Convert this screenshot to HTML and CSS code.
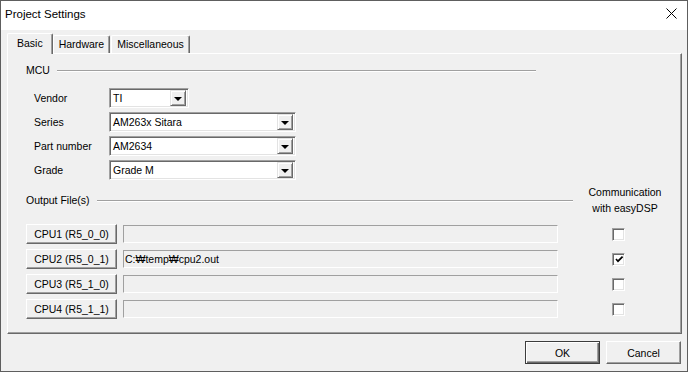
FILE: index.html
```html
<!DOCTYPE html>
<html lang="en">
<head>
    <meta charset="UTF-8">
    <title>Project Settings</title>
    <link rel="stylesheet" href="styles.css">
</head>
<body>
    <div class="window">
        <!-- Title Bar -->
        <div class="titlebar">
            <span class="title">Project Settings</span>
            <svg class="close" width="11" height="11" viewBox="0 0 11 11">
                <path d="M0.5 0.5 L10.5 10.5 M10.5 0.5 L0.5 10.5" stroke="#000" stroke-width="1" fill="none"/>
            </svg>
        </div>

        <div class="client">
            <!-- Tabs -->
            <div class="tabs">
                <div class="tab active">Basic</div>
                <div class="tab">Hardware</div>
                <div class="tab">Miscellaneous</div>
            </div>

            <div class="panel">
                <!-- MCU group -->
                <div class="group-head mcu-head">
                    <span>MCU</span>
                    <div class="rule"></div>
                </div>

                <div class="form">
                    <label>Vendor</label>
                    <div class="combo small"><span>TI</span><div class="drop"><i></i></div></div>
                    <label>Series</label>
                    <div class="combo"><span>AM263x Sitara</span><div class="drop"><i></i></div></div>
                    <label>Part number</label>
                    <div class="combo"><span>AM2634</span><div class="drop"><i></i></div></div>
                    <label>Grade</label>
                    <div class="combo"><span>Grade M</span><div class="drop"><i></i></div></div>
                </div>

                <!-- Output group -->
                <div class="output-head">
                    <div class="group-head out-head">
                        <span>Output File(s)</span>
                        <div class="rule"></div>
                    </div>
                    <div class="comm">Communication<br>with easyDSP</div>
                </div>

                <div class="outputs">
                    <button class="btn cpu">CPU1 (R5_0_0)</button>
                    <div class="field"></div>
                    <div class="check"></div>

                    <button class="btn cpu">CPU2 (R5_0_1)</button>
                    <div class="field">C:₩temp₩cpu2.out</div>
                    <div class="check">
                        <svg width="9" height="9" viewBox="0 0 9 9">
                            <path d="M1 4 L3 6.2 L7.6 1.6" stroke="#000" stroke-width="1.7" fill="none"/>
                        </svg>
                    </div>

                    <button class="btn cpu">CPU3 (R5_1_0)</button>
                    <div class="field"></div>
                    <div class="check"></div>

                    <button class="btn cpu">CPU4 (R5_1_1)</button>
                    <div class="field"></div>
                    <div class="check"></div>
                </div>
            </div>

            <!-- Dialog buttons -->
            <div class="footer">
                <button class="btn dlg default">OK</button>
                <button class="btn dlg">Cancel</button>
            </div>
        </div>
    </div>
</body>
</html>
```

FILE: styles.css
```css
/* General Styles */
body, html {
    margin: 0;
    padding: 0;
    font-family: "Liberation Sans", Arial, sans-serif;
    font-size: 10.5px;
    color: #000;
    background: #fff;
}

.window {
    width: 688px;
    height: 372px;
    box-sizing: border-box;
    border: 1px solid #5e5e5e;
    display: flex;
    flex-direction: column;
    background: #f0f0f0;
}

/* Title Bar */
.titlebar {
    height: 29px;
    box-sizing: border-box;
    background: #fff;
    display: flex;
    align-items: center;
    justify-content: space-between;
    padding: 0 10px 4px 4px;
}

.title {
    font-size: 11.5px;
}

.close {
    display: block;
}

/* Client area */
.client {
    flex: 1;
    padding: 3px 5px 0 6px;
}

/* Tabs */
.tabs {
    display: flex;
    align-items: flex-end;
    height: 20px;
}

.tab {
    height: 18px;
    box-sizing: border-box;
    line-height: 17px;
    padding: 0 5px 0 5px;
    border-top: 1px solid #fff;
    border-left: 1px solid #fff;
    border-right: 1px solid #696969;
    box-shadow: inset -1px 0 #a0a0a0;
    border-radius: 2px 2px 0 0;
    background: #f0f0f0;
}

.tab + .tab {
    margin-left: 1px;
}

.tab.active {
    height: 21px;
    margin-bottom: -1px;
    padding: 0 9px 0 9px;
    line-height: 19px;
    position: relative;
    z-index: 1;
}

.tab.active + .tab {
    margin-left: 0;
}

/* Tab panel */
.panel {
    height: 281px;
    box-sizing: border-box;
    border-top: 1px solid #fff;
    border-left: 1px solid #fff;
    border-right: 1px solid #696969;
    border-bottom: 1px solid #696969;
    box-shadow: inset -1px -1px #a0a0a0;
    padding: 10px 0 0 18px;
}

.group-head {
    display: flex;
    align-items: center;
    height: 12px;
    line-height: 12px;
}

.group-head .rule {
    flex: 1;
    border-top: 1px solid #a0a0a0;
    border-bottom: 1px solid #fff;
    margin-left: 7px;
    margin-top: 1px;
}

.mcu-head {
    width: 510px;
}

/* MCU form */
.form {
    display: grid;
    grid-template-columns: 75px auto;
    grid-auto-rows: 20px;
    row-gap: 4px;
    align-items: center;
    justify-items: start;
    margin: 12px 0 0 8px;
}

.combo {
    width: 187px;
    height: 20px;
    box-sizing: border-box;
    border-top: 1px solid #a0a0a0;
    border-left: 1px solid #a0a0a0;
    border-right: 1px solid #fff;
    border-bottom: 1px solid #fff;
    box-shadow: inset 1px 1px #696969, inset -1px -1px #e3e3e3;
    background: #fff;
    display: flex;
    align-items: center;
    padding: 2px 2px 2px 3px;
}

.combo.small {
    width: 80px;
}

.combo span {
    flex: 1;
}

.drop {
    width: 16px;
    height: 16px;
    box-sizing: border-box;
    background: #f0f0f0;
    border-top: 1px solid #e3e3e3;
    border-left: 1px solid #e3e3e3;
    border-right: 1px solid #696969;
    border-bottom: 1px solid #696969;
    box-shadow: inset 1px 1px #fff, inset -1px -1px #a0a0a0;
    display: flex;
    align-items: center;
    justify-content: center;
}

.drop i {
    width: 0;
    height: 0;
    border-top: 4px solid #000;
    border-left: 4px solid transparent;
    border-right: 4px solid transparent;
    margin-top: 1px;
}

/* Output files */
.output-head {
    display: flex;
    align-items: center;
    margin-top: 4px;
}

.out-head {
    width: 547px;
}

.comm {
    width: 80px;
    margin-left: 12px;
    text-align: center;
    line-height: 16px;
}

.outputs {
    display: grid;
    grid-template-columns: 91px 435px 13px;
    column-gap: 6px;
    grid-auto-rows: 20px;
    row-gap: 5px;
    align-items: center;
    margin-top: 8px;
}

.btn {
    font-family: inherit;
    font-size: 10.5px;
    color: #000;
    background: #f0f0f0;
    box-sizing: border-box;
    border-top: 1px solid #fff;
    border-left: 1px solid #fff;
    border-right: 1px solid #696969;
    border-bottom: 1px solid #696969;
    box-shadow: inset -1px -1px #a0a0a0;
    padding: 0;
    margin: 0;
}

.cpu {
    height: 20px;
}

.field {
    height: 18px;
    box-sizing: border-box;
    border-top: 1px solid #a0a0a0;
    border-left: 1px solid #a0a0a0;
    border-right: 1px solid #fff;
    border-bottom: 1px solid #fff;
    padding-left: 1px;
    line-height: 16px;
}

.check {
    width: 13px;
    height: 13px;
    box-sizing: border-box;
    margin-left: 48px;
    background: #fff;
    border-top: 1px solid #a0a0a0;
    border-left: 1px solid #a0a0a0;
    border-right: 1px solid #fff;
    border-bottom: 1px solid #fff;
    box-shadow: inset 1px 1px #696969, inset -1px -1px #e3e3e3;
    display: flex;
    align-items: center;
    justify-content: center;
}

.check svg {
    display: block;
    margin: 1px 0 0 1px;
}

/* Footer */
.footer {
    display: flex;
    justify-content: flex-end;
    gap: 6px;
    padding: 7px 1px 0 0;
}

.dlg {
    width: 75px;
    height: 23px;
}

.dlg.default {
    border: 1px solid #3c3c3c;
    box-shadow: inset 1px 1px #fff, inset -1px -1px #696969, inset -2px -2px #a0a0a0;
}
```
